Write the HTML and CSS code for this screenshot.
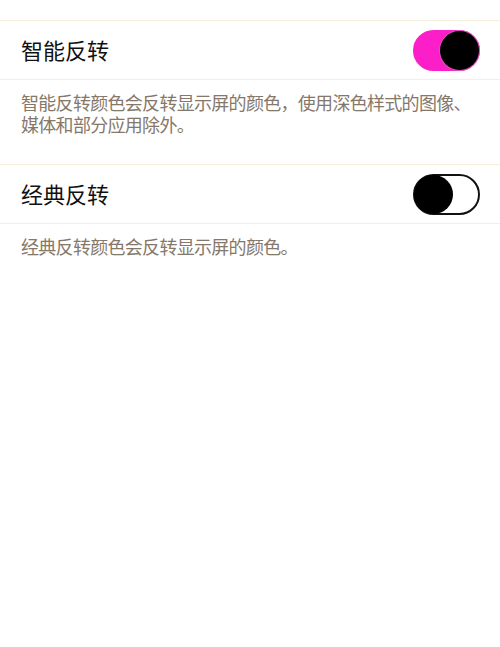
FILE: index.html
```html
<!DOCTYPE html>
<html lang="zh-CN">
<head>
    <meta charset="UTF-8">
    <meta name="viewport" content="width=device-width, initial-scale=1.0">
    <title>反转颜色</title>
    <link rel="stylesheet" href="styles.css">
</head>
<body>
    <div class="page">
        <div class="group">
            <div class="row">
                <span class="row-title">智能反转</span>
                <div class="switch on"><div class="knob"></div></div>
            </div>
        </div>
        <p class="note">智能反转颜色会反转显示屏的颜色，使用深色样式的图像、媒体和部分应用除外。</p>

        <div class="group">
            <div class="row">
                <span class="row-title">经典反转</span>
                <div class="switch"><div class="knob"></div></div>
            </div>
        </div>
        <p class="note">经典反转颜色会反转显示屏的颜色。</p>
    </div>
</body>
</html>
```

FILE: styles.css
```css
body {
    margin: 0;
    padding: 0;
    background-color: #fff;
    font-family: "Noto Sans CJK SC", "Noto Sans", sans-serif;
    color: #111;
}

.page {
    padding-top: 20px;
}

.group {
    border-top: 1px solid #f6eedd;
    border-bottom: 1px solid #f6eedd;
    background: #fff;
}

.row {
    height: 58px;
    display: flex;
    align-items: center;
    justify-content: space-between;
    padding: 0 20px 0 21px;
}

.row-title {
    font-size: 22px;
    line-height: 1;
    margin-top: -2px;
}

.switch {
    width: 67px;
    height: 41px;
    box-sizing: border-box;
    border-radius: 21px;
    border: 2px solid #111;
    background: #fff;
    display: flex;
    align-items: center;
    justify-content: flex-start;
}

.switch .knob {
    width: 39px;
    height: 39px;
    margin-left: -1px;
    border-radius: 50%;
    background: #000;
}

.switch.on {
    background: #fb1ec9;
    border-color: #fb1ec9;
    justify-content: flex-end;
}

.switch.on .knob {
    margin-left: 0;
    margin-right: -1px;
    box-shadow: 0 0 0 1px #e04fb8;
}

.note {
    margin: 0;
    padding: 11px 21px 29px 21px;
    font-size: 18px;
    letter-spacing: -0.7px;
    line-height: 22px;
    color: #85786a;
}
```
